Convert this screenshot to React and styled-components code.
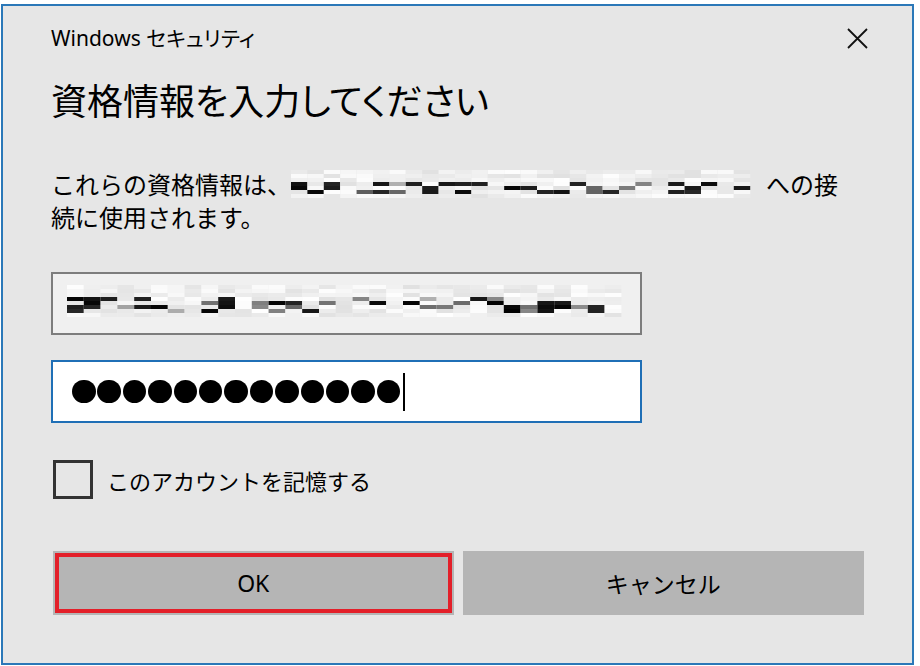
import React from "react";
import styled, { createGlobalStyle } from "styled-components";

const Global = createGlobalStyle`
  html, body { margin: 0; padding: 0; background: #ffffff; }
  body {
    font-family: "Noto Sans", "Noto Sans CJK JP", sans-serif;
    color: #000;
  }
`;

const Window = styled.div`
  box-sizing: border-box;
  margin: 4px 0 0 1px;
  width: 913px;
  height: 661px;
  border: 2px solid #2b78b8;
  background: #e6e6e6;
  display: flex;
  flex-direction: column;
  padding: 0 48px 0 48px;
`;

const TitleBar = styled.div`
  display: flex;
  align-items: center;
  justify-content: space-between;
  height: 30px;
  margin-top: 17px;
`;

const Caption = styled.div`
  font-size: 21px;
  line-height: 30px;
  font-feature-settings: "palt";
`;

const Close = styled.button`
  all: unset;
  width: 22px;
  height: 22px;
  margin-right: -4px;
  display: flex;
  align-items: center;
  justify-content: center;
`;

const Heading = styled.h1`
  margin: 24px 0 0 0;
  font-family: "Noto Sans CJK JP", sans-serif;
  font-weight: 400;
  font-size: 36px;
  line-height: 44px;
  font-feature-settings: "palt";
`;

const Message = styled.p`
  margin: 46px 0 0 0;
  font-family: "Noto Sans CJK JP", sans-serif;
  font-size: 24px;
  line-height: 33px;
`;

const Mosaic = styled.svg`
  display: inline-block;
  vertical-align: middle;
  margin: -6px 0 0 0;
`;

const Field = styled.div`
  box-sizing: border-box;
  width: 591px;
  height: 63px;
  margin-top: ${(p) => p.$top}px;
  border: 2px solid ${(p) => (p.$focused ? "#1f6fb6" : "#7d7d7d")};
  background: ${(p) => (p.$focused ? "#ffffff" : "#f0f0f0")};
  display: flex;
  align-items: center;
  padding-left: ${(p) => (p.$focused ? 19 : 14)}px;
`;

const Dot = styled.span`
  width: 23.5px;
  height: 23.5px;
  border-radius: 50%;
  background: #000;
  margin-right: 1.9px;
  flex: none;
`;

const Caret = styled.span`
  width: 2px;
  height: 38px;
  background: #000;
  margin-left: 1px;
`;

const CheckRow = styled.label`
  display: flex;
  align-items: center;
  margin-top: 37px;
  gap: 14px;
  font-family: "Noto Sans CJK JP", sans-serif;
  font-size: 22px;
  line-height: 38px;
`;

const Box = styled.span`
  box-sizing: border-box;
  width: 40px;
  height: 39px;
  border: 3px solid #333333;
  margin-left: 2px;
`;

const Buttons = styled.div`
  display: flex;
  gap: 9px;
  margin-top: 52px;
  margin-left: 2px;
`;

const Button = styled.button`
  all: unset;
  box-sizing: border-box;
  width: ${(p) => p.$w}px;
  height: 64px;
  background: #b5b5b5;
  display: flex;
  align-items: center;
  justify-content: center;
  font-family: "Noto Sans", "Noto Sans CJK JP", sans-serif;
  font-size: 23px;
  color: #000;
  box-shadow: ${(p) =>
    p.$marked ? "inset 0 0 0 2px #b5b5b5, inset 0 0 0 6px #e31f29" : "none"};
`;

function rng(seed) {
  let s = seed;
  return () => {
    s = (s * 16807) % 2147483647;
    return (s - 1) / 2147483646;
  };
}

function MosaicArt({ width, height, cell, seed }) {
  const r = rng(seed);
  const rects = [];
  const cols = Math.floor(width / cell);
  const rowH = 4;
  const rows = Math.floor(height / rowH);
  for (let c = 0; c < cols; c++) {
    const colType = r();
    for (let y = 0; y < rows; y++) {
      const v = r();
      const mid = y > rows * 0.3 && y < rows * 0.85;
      let g;
      if (mid && v < (colType < 0.4 ? 0.5 : 0.1)) g = Math.floor(r() * 40);
      else if (mid && v < 0.3) g = 90 + Math.floor(r() * 90);
      else g = 225 + Math.floor(r() * 30);
      rects.push(
        <rect
          key={c + "-" + y}
          x={c * cell}
          y={y * rowH}
          width={cell}
          height={rowH}
          fill={`rgb(${g},${g},${g})`}
        />
      );
    }
  }
  return (
    <Mosaic width={width} height={height} viewBox={`0 0 ${width} ${height}`}>
      {rects}
    </Mosaic>
  );
}

export default function App() {
  return (
    <>
      <Global />
      <Window>
        <TitleBar>
          <Caption>Windows セキュリティ</Caption>
          <Close aria-label="閉じる">
            <svg width="21" height="21" viewBox="0 0 21 21">
              <path d="M1 1 L20 20 M20 1 L1 20" stroke="#111" strokeWidth="1.8" fill="none" />
            </svg>
          </Close>
        </TitleBar>
        <Heading>資格情報を入力してください</Heading>
        <Message>
          これらの資格情報は、
          <MosaicArt width={475} height={28} cell={16.4} seed={11} />
          への接
          <br />
          続に使用されます。
        </Message>
        <Field $top={39}>
          <MosaicArt width={560} height={32} cell={16.8} seed={37} />
        </Field>
        <Field $top={25} $focused>
          {Array.from({ length: 13 }).map((_, i) => (
            <Dot key={i} />
          ))}
          <Caret />
        </Field>
        <CheckRow>
          <Box />
          このアカウントを記憶する
        </CheckRow>
        <Buttons>
          <Button $w={401} $marked>OK</Button>
          <Button $w={402}>キャンセル</Button>
        </Buttons>
      </Window>
    </>
  );
}
